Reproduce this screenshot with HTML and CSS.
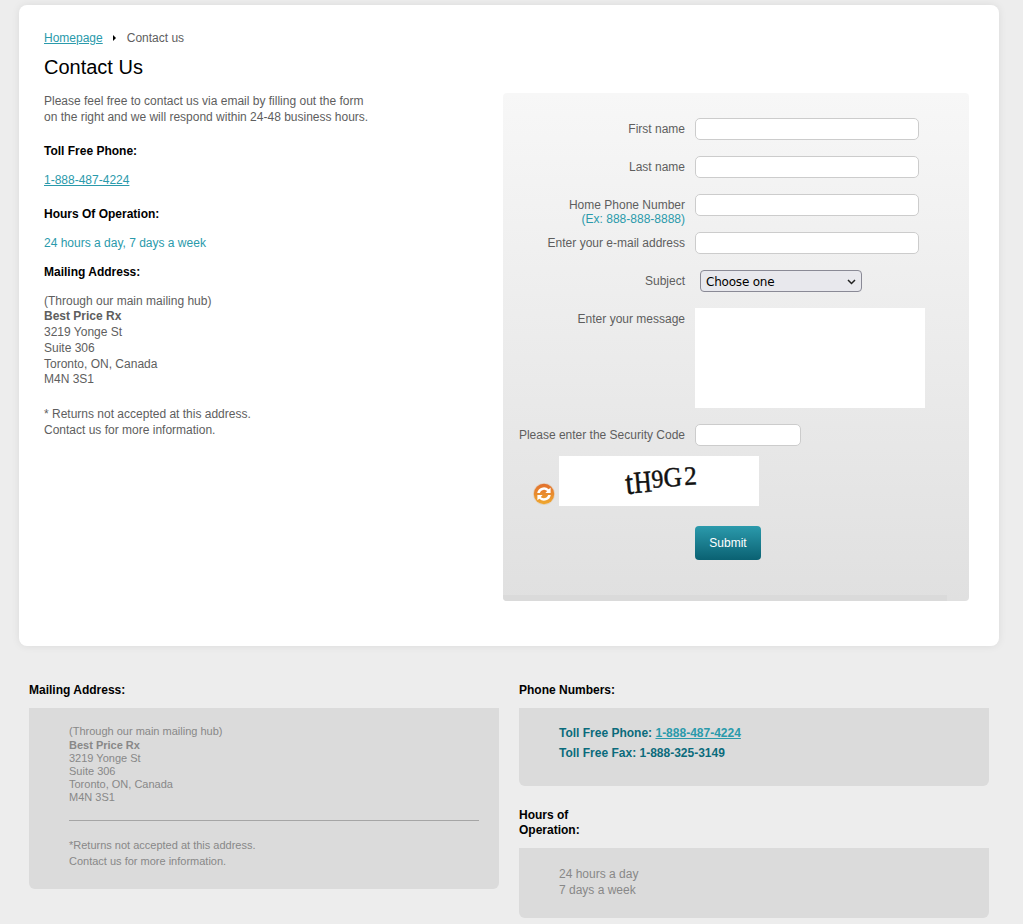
FILE: index.html
```html
<!DOCTYPE html>
<html lang="en">
<head>
<meta charset="utf-8">
<title>Contact Us</title>
<link rel="stylesheet" href="styles.css">
</head>
<body>
<main class="card">
  <nav class="crumbs"><a href="#">Homepage</a><span class="crumb-arrow"></span><span>Contact us</span></nav>
  <h1>Contact Us</h1>
  <div class="columns">
    <section class="info">
      <p class="intro">Please feel free to contact us via email by filling out the form<br>on the right and we will respond within 24-48 business hours.</p>
      <h2 class="h-phone">Toll Free Phone:</h2>
      <p class="line phone"><a href="#">1-888-487-4224</a></p>
      <h2 class="h-hours">Hours Of Operation:</h2>
      <p class="line teal">24 hours a day, 7 days a week</p>
      <h2 class="h-mail">Mailing Address:</h2>
      <p class="address">(Through our main mailing hub)<br><b>Best Price Rx</b><br>3219 Yonge St<br>Suite 306<br>Toronto, ON, Canada<br>M4N 3S1</p>
      <p class="returns">* Returns not accepted at this address.<br>Contact us for more information.</p>
    </section>
    <form class="panel">
      <div class="row"><label>First name</label><input class="field" type="text"></div>
      <div class="row"><label>Last name</label><input class="field" type="text"></div>
      <div class="row"><label>Home Phone Number<br><span class="teal">(Ex: 888-888-8888)</span></label><input class="field" type="text"></div>
      <div class="row"><label>Enter your e-mail address</label><input class="field" type="text"></div>
      <div class="row"><label>Subject</label><select class="subject"><option>Choose one</option></select></div>
      <div class="row msg"><label>Enter your message</label><textarea class="message"></textarea></div>
      <div class="row code"><label>Please enter the Security Code</label><input class="field short" type="text"></div>
      <div class="captcha-row">
        <svg class="refresh" width="22" height="22" viewBox="0 0 22 22" aria-hidden="true">
          <defs><linearGradient id="o" x1="0" y1="0" x2="0" y2="1"><stop offset="0" stop-color="#e2702e"/><stop offset="1" stop-color="#efa82e"/></linearGradient></defs>
          <circle cx="11" cy="11" r="11" fill="#e3d3c2"/>
          <circle cx="11" cy="11" r="10.2" fill="url(#o)"/>
          <path d="M4.2 10 A6.8 6.8 0 0 1 15.7 6.3 L17.6 4.7 V10 H12.4 L14.2 8.1 A4.4 4.4 0 0 0 6.9 10 Z" fill="#fff"/>
          <path d="M17.8 12 A6.8 6.8 0 0 1 6.3 15.7 L4.4 17.3 V12 H9.6 L7.8 13.9 A4.4 4.4 0 0 0 15.1 12 Z" fill="#fff"/>
        </svg>
        <div class="captcha"><span class="c1">t</span><span class="c2">H</span><span class="c3">9</span><span class="c4">G</span><span class="c5">2</span></div>
      </div>
      <button class="submit" type="button">Submit</button>
      <div class="panel-bar"></div>
    </form>
  </div>
</main>
<footer class="foot">
  <section class="foot-col">
    <h2 class="foot-h">Mailing Address:</h2>
    <div class="box box-mail">
      <p class="small">(Through our main mailing hub)<br><b>Best Price Rx</b><br>3219 Yonge St<br>Suite 306<br>Toronto, ON, Canada<br>M4N 3S1</p>
      <hr class="rule">
      <p class="small-note">*Returns not accepted at this address.<br>Contact us for more information.</p>
    </div>
  </section>
  <section class="foot-col">
    <h2 class="foot-h">Phone Numbers:</h2>
    <div class="box box-phone">
      <p class="nums">Toll Free Phone: <a href="#">1-888-487-4224</a><br>Toll Free Fax: 1-888-325-3149</p>
    </div>
    <h2 class="foot-h foot-h-hours">Hours of<br>Operation:</h2>
    <div class="box box-hours">
      <p class="hours">24 hours a day<br>7 days a week</p>
    </div>
  </section>
</footer>
</body>
</html>
```
FILE: styles.css
```css
* { box-sizing: border-box; }
html, body { margin: 0; padding: 0; }
body {
  height: 924px;
  overflow: hidden;
  background: #ededed;
  font-family: "Liberation Sans", Arial, sans-serif;
  font-size: 12px;
  line-height: 16px;
  color: #5e5e5e;
}
p, h1, h2 { margin: 0; }
a { color: #2a9aab; text-decoration: underline; }
.teal { color: #2a9aab; }

.card {
  margin: 5px 24px 0 19px;
  height: 641px;
  padding: 25px 30px 0 25px;
  background: #fff;
  border-radius: 8px;
  box-shadow: 0 0 8px rgba(0, 0, 0, 0.08);
}
.crumbs { display: flex; align-items: center; height: 16px; }
.crumb-arrow {
  width: 0;
  height: 0;
  margin: 0 11px 0 10px;
  border-left: 3px solid #000;
  border-top: 3px solid transparent;
  border-bottom: 3px solid transparent;
}
h1 {
  margin-top: 8px;
  font-size: 20px;
  line-height: 26px;
  font-weight: normal;
  color: #000;
}
h2 { font-size: 12px; line-height: 16px; font-weight: bold; color: #000; }

.columns { display: flex; justify-content: space-between; align-items: flex-start; margin-top: 13px; }
.info { width: 400px; }
.h-phone { margin-top: 18px; }
.phone { margin-top: 13px; }
.h-hours { margin-top: 18px; }
.h-hours + .line { margin-top: 13px; }
.h-mail { margin-top: 13px; }
.address { margin-top: 13.5px; line-height: 15.8px; }
.returns { margin-top: 18px; }

.panel {
  position: relative;
  width: 466px;
  height: 508px;
  padding-top: 25px;
  background: linear-gradient(#f7f7f7, #e0e0e0);
  border-radius: 4px;
  overflow: hidden;
}
.panel-bar {
  position: absolute;
  left: 0;
  bottom: 0;
  width: 444px;
  height: 6px;
  background: #dadada;
}
.row {
  display: grid;
  grid-template-columns: 182px auto;
  column-gap: 10px;
  justify-content: start;
  align-items: start;
  height: 38px;
}
.row label { display: block; text-align: right; line-height: 14px; padding-top: 4px; }
.field {
  display: block;
  width: 224px;
  height: 22px;
  padding: 0 4px;
  background: #fff;
  border: 1px solid #ccc;
  border-radius: 5px;
}
.subject {
  display: block;
  width: 162px;
  height: 22px;
  margin-left: 5px;
  padding: 1px 0 0 5px;
  appearance: none;
  -webkit-appearance: none;
  background: #e8e8ed url("data:image/svg+xml,%3Csvg xmlns='http://www.w3.org/2000/svg' width='9' height='6'%3E%3Cpath d='M1 1l3.5 3.5L8 1' fill='none' stroke='%23222' stroke-width='1.5'/%3E%3C/svg%3E") no-repeat 146px 8px;
  border: 1px solid #8a8a96;
  border-radius: 4px;
  color: #000;
  font-family: "DejaVu Sans", sans-serif;
  font-size: 12px;
  letter-spacing: -0.2px;
}
.msg { height: 116px; }
.message {
  display: block;
  width: 230px;
  height: 100px;
  margin: 0;
  background: #fff;
  border: 0;
  resize: none;
}
.code { height: 32px; }
.short { width: 106px; }
.captcha-row { display: flex; align-items: flex-end; padding-left: 30px; gap: 4px; height: 50px; }
.refresh { margin-bottom: 1px; }
.captcha {
  display: flex;
  justify-content: center;
  align-items: center;
  width: 200px;
  height: 50px;
  padding: 0 0 2px 5px;
  background: #fff;
  color: #111;
  font-family: "Liberation Serif", serif;
  font-size: 30px;
  line-height: 30px;
  -webkit-text-stroke: 0.55px #111;
}
.captcha span { display: block; }
.c1 { transform: translateY(3px) rotate(-6deg) scale(0.95, 1.1); }
.c2 { transform: translateY(2px) rotate(-5deg) scale(0.82, 1.02); margin-left: -2px; }
.c3 { transform: translateY(-1px) rotate(-6deg) scale(0.78, 0.85); margin-left: -3px; }
.c4 { transform: translateY(-3px) rotate(-3deg) scale(0.85, 0.92); margin-left: -3px; }
.c5 { transform: translateY(-4px) rotate(-3deg) scale(0.85, 0.88); margin-left: -1px; }
.submit {
  display: block;
  width: 66px;
  height: 34px;
  margin: 20px 0 0 192px;
  padding: 0;
  border: 0;
  border-radius: 4px;
  background: linear-gradient(#2b9aac, #0a6172);
  color: #fff;
  font-family: "Liberation Sans", Arial, sans-serif;
  font-size: 12px;
}

.foot { display: flex; gap: 20px; margin: 37px 34px 0 29px; }
.foot-col { width: 470px; }
.foot-h { line-height: 15px; margin-bottom: 10px; }
.box { background: #dbdbdb; border-radius: 0 0 6px 6px; padding-left: 40px; }
.box-mail { height: 181px; padding-top: 17.3px; padding-right: 20px; }
.small { font-size: 11px; line-height: 13.2px; color: #888; }
.rule { margin: 15.7px 0 0; height: 1px; border: 0; background: #a5a5a5; }
.small-note { margin-top: 16px; font-size: 11px; line-height: 16px; color: #888; }
.box-phone { height: 78px; padding-top: 15px; }
.nums { font-weight: bold; line-height: 20px; color: #0b6b7c; }
.foot-h-hours { margin-top: 22px; margin-bottom: 10px; }
.box-hours { height: 70px; padding-top: 18px; }
.hours { color: #888; }
```
